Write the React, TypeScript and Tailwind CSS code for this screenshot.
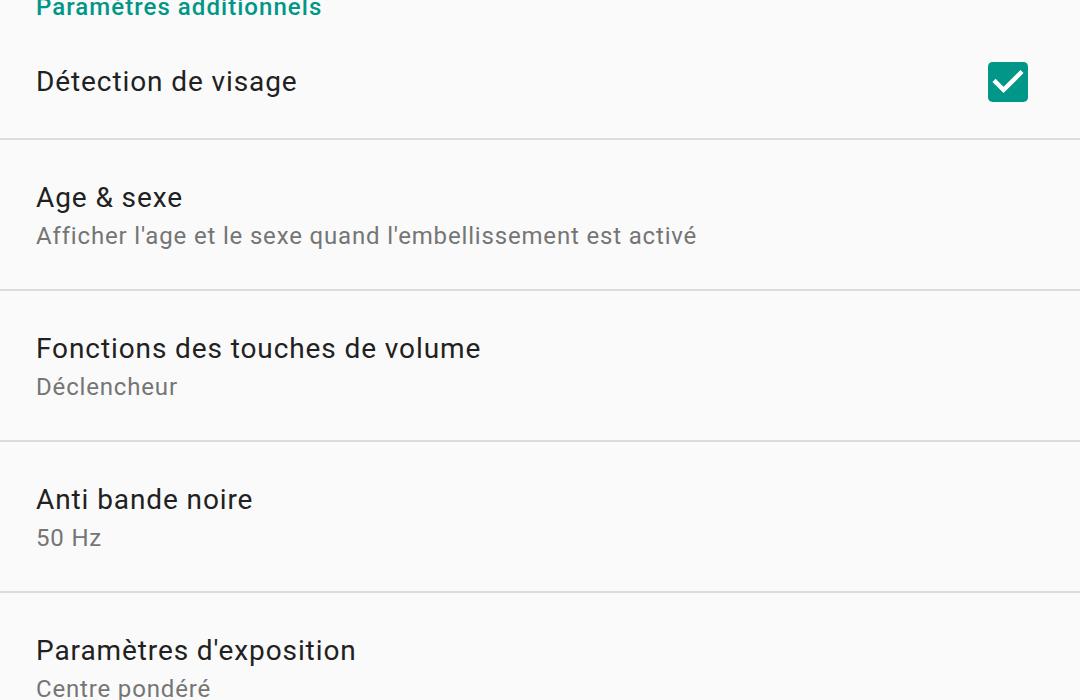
import React from "react";

const rows = [
  { title: "Age & sexe", sub: "Afficher l'age et le sexe quand l'embellissement est activé" },
  { title: "Fonctions des touches de volume", sub: "Déclencheur" },
  { title: "Anti bande noire", sub: "50 Hz" },
  { title: "Paramètres d'exposition", sub: "Centre pondéré" },
];

function CheckBox() {
  return (
    <svg width="40" height="40" viewBox="3 3 18 18" className="block">
      <path
        fill="#009688"
        d="M19 3H5c-1.11 0-2 .9-2 2v14c0 1.1.89 2 2 2h14c1.11 0 2-.9 2-2V5c0-1.1-.89-2-2-2z"
      />
      <path fill="#ffffff" d="M10 17l-5-5 1.41-1.41L10 14.17l7.59-7.59L19 8l-9 9z" />
    </svg>
  );
}

export default function App() {
  return (
    <div
      className="w-[1080px] h-[700px] overflow-hidden bg-[#fafafa] tracking-[0.9px]"
      style={{ fontFamily: "Roboto, 'Noto Sans', sans-serif" }}
    >
      <div className="-mt-[7px] h-[32px] pl-[36px] text-[24px] leading-[28px] font-medium tracking-[1.05px] text-[#009688]">
        Paramètres additionnels
      </div>
      <div className="h-[113px] flex items-center justify-between pl-[36px] pr-[52px]">
        <div className="text-[28px] leading-[36px] text-[#212121]">Détection de visage</div>
        <CheckBox />
      </div>
      {rows.map((r) => (
        <div key={r.title}>
          <div className="h-[2px] bg-[#dcdcdc]" />
          <div className="h-[149px] pl-[36px] pt-[40px]">
            <div className="text-[28px] leading-[36px] text-[#212121]">{r.title}</div>
            <div className="mt-[4px] text-[24px] leading-[32px] tracking-[0.83px] text-[#757575]">
              {r.sub}
            </div>
          </div>
        </div>
      ))}
    </div>
  );
}
